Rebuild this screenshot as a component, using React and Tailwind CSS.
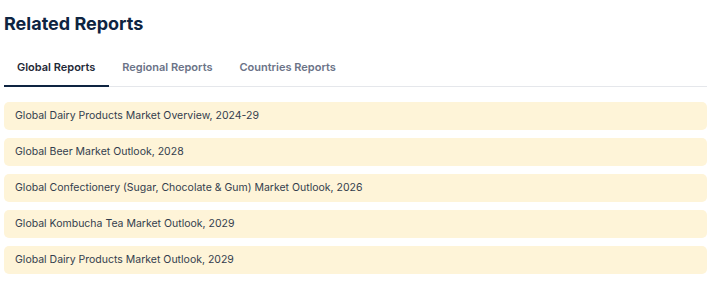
const tabs = ["Global Reports", "Regional Reports", "Countries Reports"];

const reports = [
  "Global Dairy Products Market Overview, 2024-29",
  "Global Beer Market Outlook, 2028",
  "Global Confectionery (Sugar, Chocolate & Gum) Market Outlook, 2026",
  "Global Kombucha Tea Market Outlook, 2029",
  "Global Dairy Products Market Outlook, 2029",
];

export default function App() {
  return (
    <div className="h-[288px] w-[724px] bg-white font-['Inter',sans-serif]">
      <div className="w-[707px] pl-1 pt-[12px]">
        <h2 className="text-[18px] font-bold leading-[24px] text-[#0e2441]">Related Reports</h2>
        <div className="mt-[23px] flex border-b border-[#e5e7eb]">
          {tabs.map((t, i) => (
            <button
              key={t}
              className={
                i === 0
                  ? "-mb-px border-b-2 border-[#0e2441] pl-[13px] pr-[14px] pb-[10px] text-[11px] font-semibold leading-[16px] text-[#1f2937]"
                  : "-mb-px border-b-2 border-transparent pl-[13px] pr-[14px] pb-[10px] text-[11px] font-semibold leading-[16px] text-[#6b7387]"
              }
            >
              {t}
            </button>
          ))}
        </div>
        <ul className="mt-[15px] space-y-2">
          {reports.map((r, i) => (
            <li
              key={i}
              className="flex h-[28px] items-center rounded-[5px] bg-[#fef4d8] pl-[11px] text-[10.5px] text-[#333d4d]"
            >
              {r}
            </li>
          ))}
        </ul>
      </div>
    </div>
  );
}
